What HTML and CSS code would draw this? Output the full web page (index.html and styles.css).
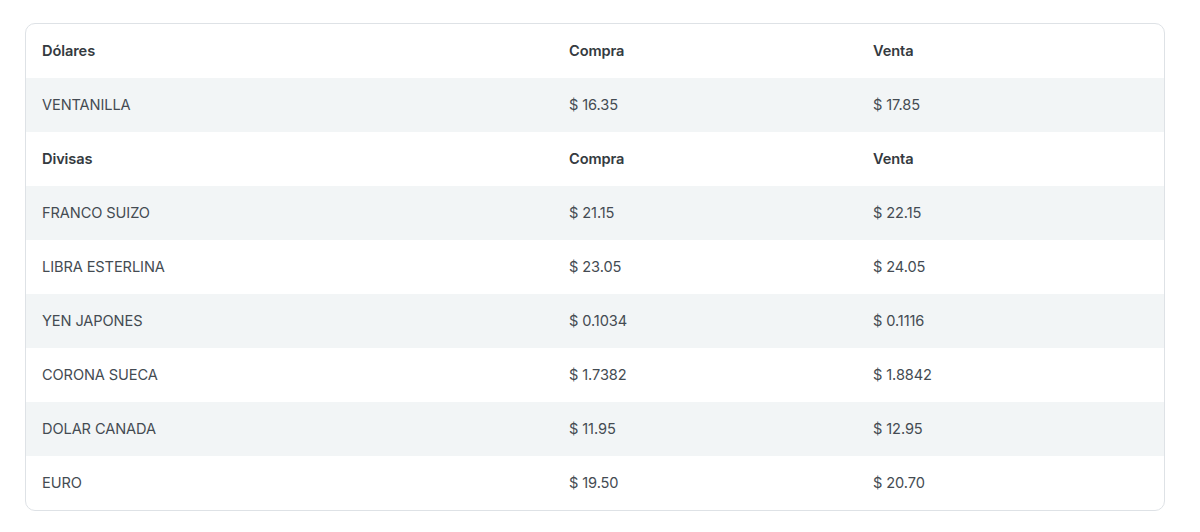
FILE: index.html
```html
<!DOCTYPE html>
<html lang="es">
<head>
    <meta charset="UTF-8">
    <meta name="viewport" content="width=device-width, initial-scale=1.0">
    <title>Tipo de cambio</title>
    <link rel="stylesheet" href="styles.css">
</head>
<body>

    <div class="table-container">
        <table>
            <colgroup>
                <col class="col-name">
                <col class="col-buy">
                <col>
            </colgroup>
            <tbody>
                <tr class="head-row">
                    <th>Dólares</th>
                    <th>Compra</th>
                    <th>Venta</th>
                </tr>
                <tr class="striped">
                    <td>VENTANILLA</td>
                    <td>$ 16.35</td>
                    <td>$ 17.85</td>
                </tr>
                <tr class="head-row">
                    <th>Divisas</th>
                    <th>Compra</th>
                    <th>Venta</th>
                </tr>
                <tr class="striped">
                    <td>FRANCO SUIZO</td>
                    <td>$ 21.15</td>
                    <td>$ 22.15</td>
                </tr>
                <tr>
                    <td>LIBRA ESTERLINA</td>
                    <td>$ 23.05</td>
                    <td>$ 24.05</td>
                </tr>
                <tr class="striped">
                    <td>YEN JAPONES</td>
                    <td>$ 0.1034</td>
                    <td>$ 0.1116</td>
                </tr>
                <tr>
                    <td>CORONA SUECA</td>
                    <td>$ 1.7382</td>
                    <td>$ 1.8842</td>
                </tr>
                <tr class="striped">
                    <td>DOLAR CANADA</td>
                    <td>$ 11.95</td>
                    <td>$ 12.95</td>
                </tr>
                <tr>
                    <td>EURO</td>
                    <td>$ 19.50</td>
                    <td>$ 20.70</td>
                </tr>
            </tbody>
        </table>
    </div>

</body>
</html>
```

FILE: styles.css
```css
body {
    font-family: 'Inter', 'Roboto', sans-serif;
    background-color: #fff;
    color: #444b52;
    margin: 0;
    padding: 23px 0 0 25px;
}
.table-container {
    width: 1138px;
    border: 1px solid #dee2e6;
    border-radius: 10px;
    overflow: hidden;
}
table {
    width: 100%;
    border-collapse: collapse;
    table-layout: fixed;
}
.col-name {
    width: 527px;
}
.col-buy {
    width: 304px;
}
th, td {
    height: 54px;
    padding: 0 16px 1px 16px;
    text-align: left;
    font-size: 14.6px;
    letter-spacing: -0.1px;
    white-space: nowrap;
    box-sizing: border-box;
}
th {
    font-weight: 600;
    color: #343a40;
}
td {
    font-weight: 400;
}
tr.striped {
    background-color: #f2f5f6;
}
```
